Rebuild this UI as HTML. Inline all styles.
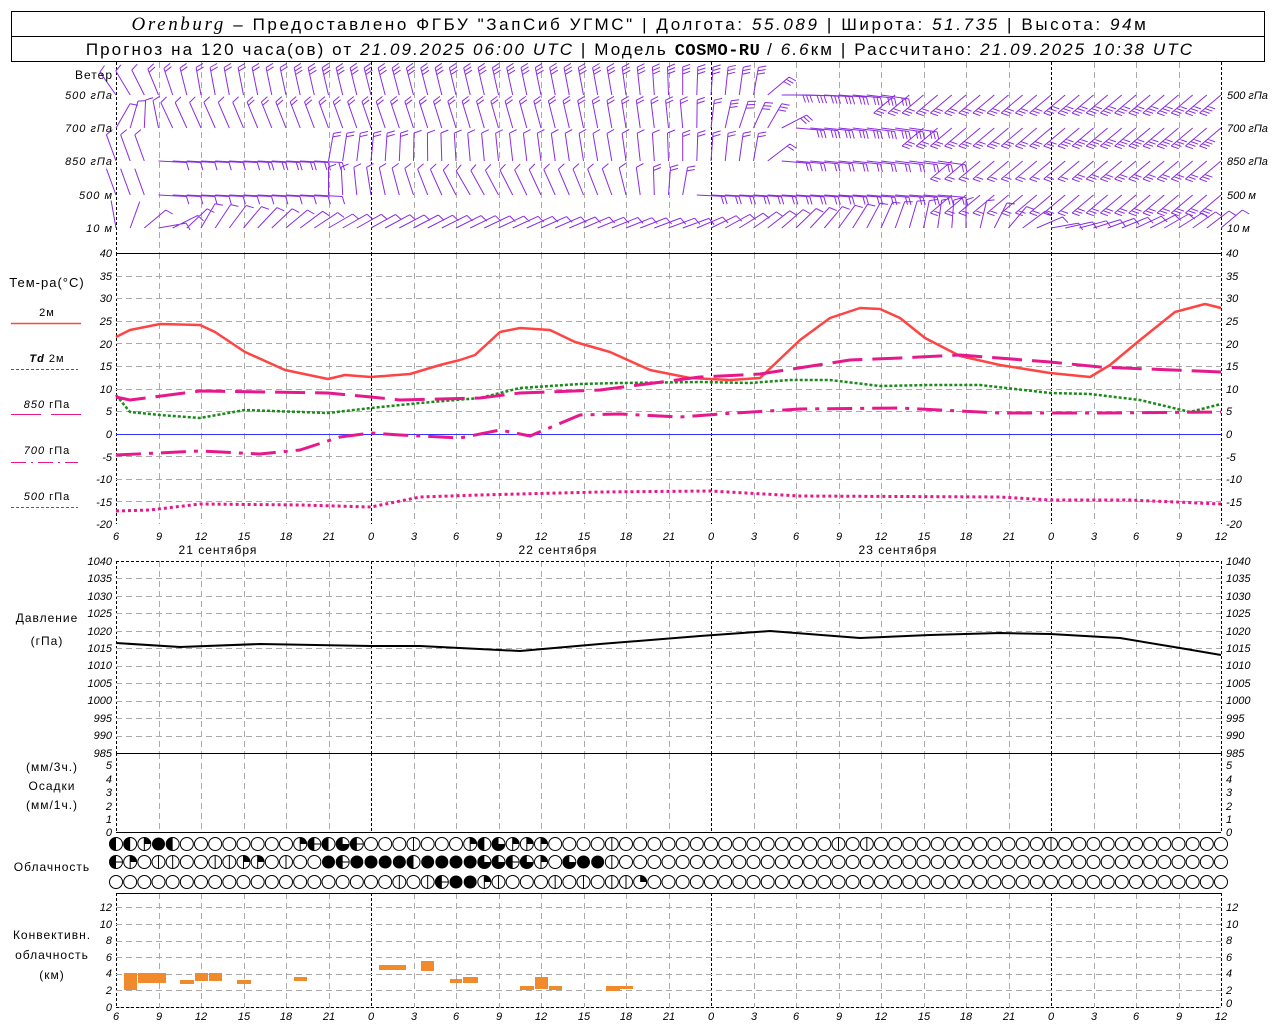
<!DOCTYPE html>
<html><head><meta charset="utf-8"><style>
html,body{margin:0;padding:0;background:#fff;width:1280px;height:1024px;overflow:hidden}
svg{display:block}
text{font-family:"Liberation Sans","DejaVu Sans",sans-serif;fill:#000}
.t{font-size:11px;font-style:italic}
.l{font-size:12px;letter-spacing:1px}
.h{font-size:17px}
.i{font-style:italic}
</style></head><body>
<svg id="s" width="1280" height="1024" viewBox="0 0 1280 1024" xmlns="http://www.w3.org/2000/svg">
<rect x="11.5" y="11.5" width="1253" height="50" fill="none" stroke="#000"/>
<line x1="11" y1="36.5" x2="1265" y2="36.5" stroke="#000"/>
<text x="640" y="30" text-anchor="middle" class="h" letter-spacing="2.6"><tspan font-family="Liberation Serif" font-style="italic" font-size="19">Orenburg</tspan> – Предоставлено ФГБУ "ЗапСиб УГМС" | Долгота: <tspan class="i">55.089</tspan> | Широта: <tspan class="i">51.735</tspan> | Высота: <tspan class="i">94</tspan>м</text>
<text x="640" y="55" text-anchor="middle" class="h" font-size="16" letter-spacing="2.1">Прогноз на 120 часа(ов) от <tspan class="i">21.09.2025 06:00 UTC</tspan> | Модель <tspan font-family="Liberation Mono" font-weight="bold" letter-spacing="0.5">COSMO-RU</tspan> / <tspan class="i">6.6</tspan>км | Рассчитано: <tspan class="i">21.09.2025 10:38 UTC</tspan></text>
<g id="grid"></g>
<g id="data"></g>
<g class="l" text-anchor="end">
<text x="113" y="79">Ветер</text>
<text x="113" y="99" class="t">500 гПа</text>
<text x="113" y="132" class="t">700 гПа</text>
<text x="113" y="165" class="t">850 гПа</text>
<text x="113" y="199" class="t">500  м</text>
<text x="113" y="232" class="t">10   м</text>
</g>
<g text-anchor="start">
<text x="1227" y="99" class="t">500 гПа</text>
<text x="1227" y="132" class="t">700 гПа</text>
<text x="1227" y="165" class="t">850 гПа</text>
<text x="1227" y="199" class="t">500  м</text>
<text x="1227" y="232" class="t">10   м</text>
</g>
<g class="l" text-anchor="middle">
<text x="47" y="287" font-size="13">Тем-ра(°C)</text>
<text x="47" y="316" font-size="11">2м</text>
<text x="47" y="362" font-size="11"><tspan class="i" font-weight="bold">Td</tspan>  2м</text>
<text x="47" y="408" font-size="11"><tspan class="i">850</tspan> гПа</text>
<text x="47" y="454" font-size="11"><tspan class="i">700</tspan> гПа</text>
<text x="47" y="500" font-size="11"><tspan class="i">500</tspan> гПа</text>
<text x="47" y="622">Давление</text>
<text x="47" y="645">(гПа)</text>
<text x="52" y="771">(мм/3ч.)</text>
<text x="52" y="790">Осадки</text>
<text x="52" y="809">(мм/1ч.)</text>
<text x="52" y="871">Облачность</text>
<text x="52" y="939">Конвективн.</text>
<text x="52" y="959">облачность</text>
<text x="52" y="979">(км)</text>
</g>
<line x1="11" y1="323.5" x2="81" y2="323.5" stroke="#f44" stroke-width="1.5"/>
<line x1="11" y1="369.5" x2="78" y2="369.5" stroke="#1a8a1a" stroke-dasharray="3,2"/>
<line x1="11" y1="414.5" x2="81" y2="414.5" stroke="#e6198c" stroke-dasharray="30,10"/>
<line x1="11" y1="462.5" x2="78" y2="462.5" stroke="#e6198c" stroke-dasharray="15,5,2,5"/>
<line x1="11" y1="507.5" x2="78" y2="507.5" stroke="#e6198c" stroke-dasharray="3,2"/>
<g class="t" text-anchor="end">
<text x="112" y="257">40</text><text x="112" y="280">35</text><text x="112" y="302">30</text><text x="112" y="325">25</text><text x="112" y="348">20</text><text x="112" y="370">15</text><text x="112" y="393">10</text><text x="112" y="415">5</text><text x="112" y="438">0</text><text x="112" y="461">-5</text><text x="112" y="483">-10</text><text x="112" y="506">-15</text><text x="112" y="528">-20</text>
</g>
<g class="t">
<text x="1226" y="257">40</text><text x="1226" y="280">35</text><text x="1226" y="302">30</text><text x="1226" y="325">25</text><text x="1226" y="348">20</text><text x="1226" y="370">15</text><text x="1226" y="393">10</text><text x="1226" y="415">5</text><text x="1226" y="438">0</text><text x="1226" y="461">-5</text><text x="1226" y="483">-10</text><text x="1226" y="506">-15</text><text x="1226" y="528">-20</text>
</g>
<g class="t" text-anchor="end" font-size="10">
<text x="112" y="565">1040</text><text x="112" y="582">1035</text><text x="112" y="600">1030</text><text x="112" y="617">1025</text><text x="112" y="635">1020</text><text x="112" y="652">1015</text><text x="112" y="669">1010</text><text x="112" y="687">1005</text><text x="112" y="704">1000</text><text x="112" y="722">995</text><text x="112" y="739">990</text><text x="112" y="757">985</text>
<text x="112" y="769">5</text><text x="112" y="783">4</text><text x="112" y="796">3</text><text x="112" y="810">2</text><text x="112" y="823">1</text><text x="112" y="836">0</text>
<text x="112" y="911">12</text><text x="112" y="928">10</text><text x="112" y="944">8</text><text x="112" y="961">6</text><text x="112" y="977">4</text><text x="112" y="994">2</text><text x="112" y="1011">0</text>
</g>
<g class="t" font-size="10">
<text x="1226" y="565">1040</text><text x="1226" y="582">1035</text><text x="1226" y="600">1030</text><text x="1226" y="617">1025</text><text x="1226" y="635">1020</text><text x="1226" y="652">1015</text><text x="1226" y="669">1010</text><text x="1226" y="687">1005</text><text x="1226" y="704">1000</text><text x="1226" y="722">995</text><text x="1226" y="739">990</text><text x="1226" y="757">985</text>
<text x="1226" y="769">5</text><text x="1226" y="783">4</text><text x="1226" y="796">3</text><text x="1226" y="810">2</text><text x="1226" y="823">1</text><text x="1226" y="836">0</text>
<text x="1226" y="911">12</text><text x="1226" y="928">10</text><text x="1226" y="944">8</text><text x="1226" y="961">6</text><text x="1226" y="977">4</text><text x="1226" y="994">2</text><text x="1226" y="1007">0</text>
</g>
<g class="t" font-size="14" text-anchor="middle">
<text x="116" y="540">6</text><text x="159" y="540">9</text><text x="201" y="540">12</text><text x="244" y="540">15</text><text x="286" y="540">18</text><text x="329" y="540">21</text><text x="371" y="540">0</text><text x="414" y="540">3</text><text x="456" y="540">6</text><text x="499" y="540">9</text><text x="541" y="540">12</text><text x="584" y="540">15</text><text x="626" y="540">18</text><text x="669" y="540">21</text><text x="711" y="540">0</text><text x="754" y="540">3</text><text x="796" y="540">6</text><text x="839" y="540">9</text><text x="881" y="540">12</text><text x="924" y="540">15</text><text x="966" y="540">18</text><text x="1009" y="540">21</text><text x="1051" y="540">0</text><text x="1094" y="540">3</text><text x="1136" y="540">6</text><text x="1179" y="540">9</text><text x="1221" y="540">12</text>
</g>
<g class="t" font-size="14" text-anchor="middle">
<text x="116" y="1020">6</text><text x="159" y="1020">9</text><text x="201" y="1020">12</text><text x="244" y="1020">15</text><text x="286" y="1020">18</text><text x="329" y="1020">21</text><text x="371" y="1020">0</text><text x="414" y="1020">3</text><text x="456" y="1020">6</text><text x="499" y="1020">9</text><text x="541" y="1020">12</text><text x="584" y="1020">15</text><text x="626" y="1020">18</text><text x="669" y="1020">21</text><text x="711" y="1020">0</text><text x="754" y="1020">3</text><text x="796" y="1020">6</text><text x="839" y="1020">9</text><text x="881" y="1020">12</text><text x="924" y="1020">15</text><text x="966" y="1020">18</text><text x="1009" y="1020">21</text><text x="1051" y="1020">0</text><text x="1094" y="1020">3</text><text x="1136" y="1020">6</text><text x="1179" y="1020">9</text><text x="1221" y="1020">12</text>
</g>
<g class="l" text-anchor="middle" font-size="13">
<text x="218" y="554">21 сентября</text><text x="558" y="554">22 сентября</text><text x="898" y="554">23 сентября</text>
</g>
</svg>
<script>
(function(){
var NS="http://www.w3.org/2000/svg",G=document.getElementById("grid"),D=document.getElementById("data");
function el(p,t,a){var e=document.createElementNS(NS,t);for(var k in a)e.setAttribute(k,a[k]);p.appendChild(e);return e;}
function X(h){return 116+h*1105/78;}
var regs=[[62,253],[253,524],[561,753],[753,832],[893,1007]];
for(var k=0;k<=26;k++){var x=Math.round(X(k*3))+.5;var day=(k==6||k==14||k==22||k==0||k==26);
 regs.forEach(function(r){el(G,"line",{x1:x,y1:r[0],x2:x,y2:r[1],stroke:day?"#000":"#aaa","stroke-dasharray":day?"3,2":"6,4"});});}
function hl(y,c,d){el(G,"line",{x1:116,y1:y,x2:1221,y2:y,stroke:c,"stroke-dasharray":d||"none"});}
for(var i=1;i<12;i++)hl(Math.round(253+i*271/12)+.5,"#aaa","6,4");
for(var i=1;i<11;i++)hl(Math.round(561+i*192/11)+.5,"#aaa","6,4");
for(var i=0;i<7;i++)hl(Math.round(1007-(i*2)*8.3)+.5,"#aaa","6,4");
hl(253.5,"#000");hl(561.5,"#000","3,2");hl(753.5,"#000");hl(832.5,"#000");hl(893.5,"#000");hl(1007.5,"#000","3,2");hl(434.5,"#33f");
function poly(pts,c,w,d){el(D,"polyline",{points:pts,fill:"none",stroke:c,"stroke-width":w,"stroke-dasharray":d||"none","stroke-linejoin":"round"});}
poly("116,337 130,330 160,324 200,325 215,332 245,352 285,370 328,379 345,375 371,377 410,374 440,365 460,360 475,355 500,332 520,328 550,330 575,342 610,352 650,370 690,378 730,380 760,378 800,340 830,318 860,308 880,309 900,318 925,338 960,356 1000,365 1050,373 1090,377 1110,365 1140,340 1175,312 1205,304 1221,308","#f44",2.5);
poly("116,395 130,412 160,415 200,418 245,410 328,413 371,408 420,403 480,398 520,388 580,384 620,383 700,382 750,383 790,380 830,380 880,386 930,385 980,385 1050,393 1090,394 1140,400 1190,412 1221,404","#1a8a1a",2.5,"3,2");
poly("116,397 130,400 200,391 328,393 371,397 400,400 480,398 520,393 600,390 700,377 760,374 850,360 900,358 960,355 1050,362 1100,367 1221,372","#e6198c",3,"30,10");
poly("116,455 200,451 260,454 300,450 340,437 371,433 400,435 460,438 500,430 530,436 580,415 620,414 680,417 720,414 800,409 900,408 1000,413 1100,413 1221,412","#e6198c",3,"25,8,4,8");
poly("116,511 150,510 200,504 300,505 371,507 420,497 480,495 600,492 710,491 800,496 1000,497 1050,500 1130,500 1221,504","#e6198c",3,"3,3");
poly("116,643 180,647 260,644 371,646 420,646 520,651 600,644 700,636 770,631 860,638 930,635 1000,633 1050,634 1120,638 1180,648 1221,655","#000",2);
[[124,137,973,990],[138,166,973,983],[180,194,980,984],[195,208,973,981],[209,222,973,981],[237,251,980,984],[294,307,977,981],[379,406,965,970],[421,434,961,971],[450,462,979,983],[463,478,977,983],[520,534,986,990],[535,548,977,989],[549,562,986,990],[606,620,986,991],[620,633,986,989]].forEach(function(b){el(D,"rect",{x:b[0],y:b[2],width:b[1]-b[0],height:b[3]-b[2],fill:"#f08a2c"});});
var rows=[
"HHQFHooooooooQEHTEoooVoooQHTQQQooooVoooooooooooooooVoVooooooooooooVooooooooooooo",
"EQoVVooVVQQoVooFEFFFFHFFFFTTETQoTFFVoooooooooooooooooooooooooooooooooooooooooooo",
"ooooooooooooooooooooVoVEFFQVoooVoVoVVqoooooooooooooooooooooooooooooooooooooooooo"];
var ys=[844,862,882],r=6.5;
rows.forEach(function(s,ri){for(var i=0;i<=78;i++){var c=s[i]||"o",x=X(i),y=ys[ri];
 var g=el(D,"g",{});
 if(c=="F")el(g,"circle",{cx:x,cy:y,r:r,fill:"#000"});
 else{el(g,"circle",{cx:x,cy:y,r:r,fill:"#fff",stroke:"#000"});
  if(c=="H")el(g,"path",{d:"M"+x+","+(y-r)+" A"+r+","+r+" 0 0 0 "+x+","+(y+r)+"Z",fill:"#000"});
  if(c=="Q"||c=="q")el(g,"path",{d:"M"+x+","+y+" L"+x+","+(y-r)+" A"+r+","+r+" 0 0 1 "+(x+r)+","+y+"Z",fill:"#000"});
  if(c=="T")el(g,"path",{d:"M"+x+","+y+" L"+x+","+(y-r)+" A"+r+","+r+" 0 1 0 "+(x+r)+","+y+"Z",fill:"#000"});
  if(c=="E"){el(g,"path",{d:"M"+x+","+(y-r)+" A"+r+","+r+" 0 0 0 "+x+","+(y+r)+"Z",fill:"#000"});el(g,"line",{x1:x-r,y1:y,x2:x+r,y2:y,stroke:"#000"});}
  if(c=="V"||c=="Q")el(g,"line",{x1:x,y1:y-r,x2:x,y2:y+r,stroke:"#000"});
 }}});
var W=[
[95,[[0,125,1],[6,100,2],[20,105,3],[35,100,3],[45,80,3],[47,0,3],[54,-8,3],[54.9,-8,3],[55,-140,3],[78,-140,4]]],
[128,[[0,60,1],[4,115,1],[15,110,2],[30,105,2],[40,95,2],[46,60,3],[48,-5,3],[56,-8,3],[56.9,-8,3],[57,-140,3],[78,-140,4]]],
[161,[[0,110,1],[2.9,110,1],[3,-3,1],[14.9,-3,2],[15,80,2],[25,95,1],[35,100,1],[45,80,2],[47,-5,2],[58,-8,2],[58.9,-8,2],[59,-140,2],[78,-140,3]]],
[195,[[0,110,0],[2.9,110,0],[3,-3,1],[14.9,-3,1],[15,90,1],[25,120,1],[35,110,1],[40,80,2],[41,-3,2],[58,-5,2],[58.9,-5,2],[59,-140,2],[78,-140,3]]],
[228,[[0,100,0],[3,10,1],[6,60,1],[15,30,1],[40,20,1],[50,50,1],[60,90,1],[66,10,1],[78,40,1]]]];
function interp(k,h){for(var i=0;i<k.length-1;i++){if(h<=k[i+1][0]){var t=(h-k[i][0])/(k[i+1][0]-k[i][0]);return [k[i][1]+(k[i+1][1]-k[i][1])*t,Math.round(k[i][2]+(k[i+1][2]-k[i][2])*t)];}}return [k[k.length-1][1],k[k.length-1][2]];}
var P="";
W.forEach(function(w){var y=w[0];for(var h=0;h<=78;h++){var x=X(h),v=interp(w[1],h),a=v[0]*Math.PI/180,L=28;
 var ex=x+L*Math.cos(a),ey=y-L*Math.sin(a);P+="M"+x.toFixed(1)+","+y+"L"+ex.toFixed(1)+","+ey.toFixed(1);
 var b=(v[0]<-60)?a+120*Math.PI/180:a-70*Math.PI/180;
 for(var j=0;j<v[1];j++){var sx=x+(L-j*3.5)*Math.cos(a),sy=y-(L-j*3.5)*Math.sin(a);
  P+="M"+sx.toFixed(1)+","+sy.toFixed(1)+"l"+(8*Math.cos(b)).toFixed(1)+","+(-8*Math.sin(b)).toFixed(1);}
}});
el(D,"path",{d:P,stroke:"#8a2be2","stroke-width":1,fill:"none"});
})();
</script>
</body></html>
